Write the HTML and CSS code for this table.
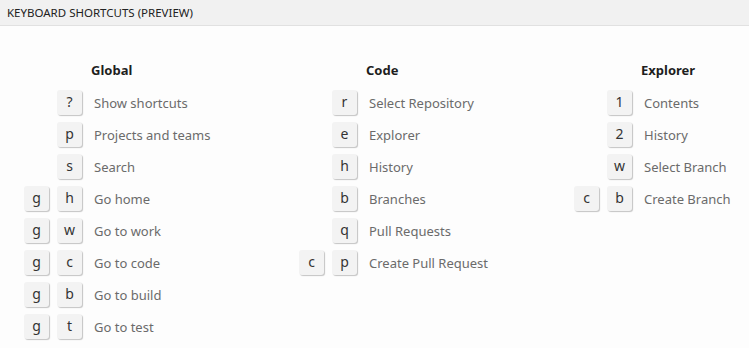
FILE: index.html
```html
<!DOCTYPE html>
<html lang="en">
<head>
    <meta charset="UTF-8">
    <title>Keyboard Shortcuts</title>
    <link rel="stylesheet" href="styles.css">
</head>
<body>
    <div class="title-bar">KEYBOARD SHORTCUTS (PREVIEW)</div>

    <div class="groups">
        <div class="group">
            <h2>Global</h2>
            <div class="row"><div class="keys"><span class="key">?</span></div><span class="label">Show shortcuts</span></div>
            <div class="row"><div class="keys"><span class="key">p</span></div><span class="label">Projects and teams</span></div>
            <div class="row"><div class="keys"><span class="key">s</span></div><span class="label">Search</span></div>
            <div class="row"><div class="keys"><span class="key">g</span><span class="key">h</span></div><span class="label">Go home</span></div>
            <div class="row"><div class="keys"><span class="key">g</span><span class="key">w</span></div><span class="label">Go to work</span></div>
            <div class="row"><div class="keys"><span class="key">g</span><span class="key">c</span></div><span class="label">Go to code</span></div>
            <div class="row"><div class="keys"><span class="key">g</span><span class="key">b</span></div><span class="label">Go to build</span></div>
            <div class="row"><div class="keys"><span class="key">g</span><span class="key">t</span></div><span class="label">Go to test</span></div>
        </div>

        <div class="group">
            <h2>Code</h2>
            <div class="row"><div class="keys"><span class="key">r</span></div><span class="label">Select Repository</span></div>
            <div class="row"><div class="keys"><span class="key">e</span></div><span class="label">Explorer</span></div>
            <div class="row"><div class="keys"><span class="key">h</span></div><span class="label">History</span></div>
            <div class="row"><div class="keys"><span class="key">b</span></div><span class="label">Branches</span></div>
            <div class="row"><div class="keys"><span class="key">q</span></div><span class="label">Pull Requests</span></div>
            <div class="row"><div class="keys"><span class="key">c</span><span class="key">p</span></div><span class="label">Create Pull Request</span></div>
        </div>

        <div class="group">
            <h2>Explorer</h2>
            <div class="row"><div class="keys"><span class="key">1</span></div><span class="label">Contents</span></div>
            <div class="row"><div class="keys"><span class="key">2</span></div><span class="label">History</span></div>
            <div class="row"><div class="keys"><span class="key">w</span></div><span class="label">Select Branch</span></div>
            <div class="row"><div class="keys"><span class="key">c</span><span class="key">b</span></div><span class="label">Create Branch</span></div>
        </div>
    </div>
</body>
</html>
```

FILE: styles.css
```css
* {
    margin: 0;
    padding: 0;
    box-sizing: border-box;
    font-family: "Noto Sans", "Open Sans", sans-serif;
}

body {
    background-color: #fdfdfd;
    color: #222;
    width: 749px;
    height: 348px;
    overflow: hidden;
}

.title-bar {
    height: 26px;
    padding: 5px 7px 0;
    font-size: 11.5px;
    line-height: 15px;
    color: #222;
    background-color: #f1f1f1;
    border-bottom: 1px solid #e1e1e1;
}

.groups {
    display: flex;
    padding-top: 35px;
}

.group {
    width: 275px;
    flex-shrink: 0;
}

.group:last-child {
    width: auto;
    flex: 1;
}

.group h2 {
    margin-left: 91px;
    margin-bottom: 11px;
    font-size: 13px;
    line-height: 18px;
    font-weight: bold;
    color: #1e1e1e;
}

.row {
    display: flex;
    align-items: center;
    height: 25px;
    margin-bottom: 7px;
}

.keys {
    width: 82px;
    display: flex;
    justify-content: flex-end;
    gap: 8px;
}

.key {
    width: 25px;
    height: 25px;
    display: flex;
    justify-content: center;
    align-items: center;
    padding-bottom: 3px;
    font-size: 14px;
    color: #333;
    background-color: #f3f3f3;
    border-radius: 3px;
    box-shadow: 1px 1px 1px #c4c4c4;
}

.label {
    margin-left: 12px;
    font-size: 13px;
    color: #6b6b6b;
}
```
